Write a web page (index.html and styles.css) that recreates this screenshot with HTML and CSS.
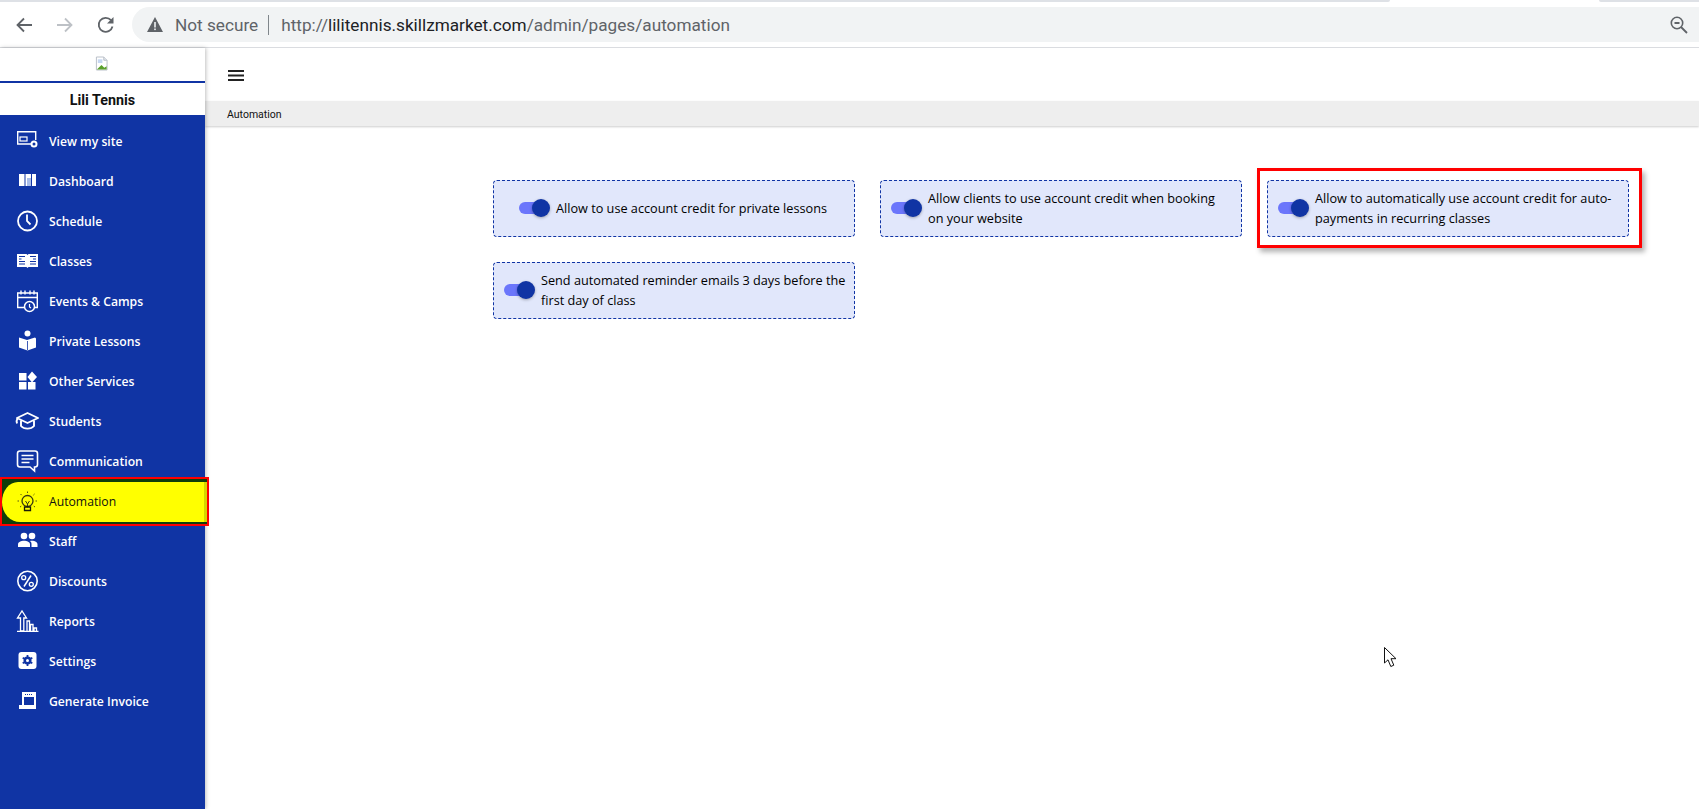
FILE: index.html
```html
<!DOCTYPE html>
<html lang="en">
<head>
<meta charset="utf-8">
<title>Automation</title>
<link rel="stylesheet" href="styles.css">
</head>
<body>
<header class="chrome">
  <div class="tabstrip"><span class="tab-left"></span><span class="tab-right"></span></div>
  <div class="toolbar">
    <svg class="nav" width="18" height="18" viewBox="0 0 18 18"><path d="M17 9H3M9 2.500L2.500 9 9 15.500" fill="none" stroke="#5f6368" stroke-width="1.800"/></svg>
    <svg class="nav" width="18" height="18" viewBox="0 0 18 18"><path d="M1 9h14M9 2.500L15.500 9 9 15.500" fill="none" stroke="#bdc1c6" stroke-width="1.800"/></svg>
    <svg class="nav" width="18" height="18" viewBox="0 0 18 18"><path d="M15.500 10.500A7 7 0 1 1 14 4.200" fill="none" stroke="#5f6368" stroke-width="1.800"/><path d="M16.500 1v6.500H10z" fill="#5f6368"/></svg>
    <div class="omnibox">
      <svg width="16" height="15" viewBox="0 0 16 15"><path d="M8 0l8 15H0z" fill="#5f6368"/><rect x="7.200" y="5" width="1.600" height="5.500" fill="#f1f3f4"/><rect x="7.200" y="11.500" width="1.600" height="1.600" fill="#f1f3f4"/></svg>
      <span class="not-secure">Not secure</span>
      <span class="divider"></span>
      <span class="url">http://<b>lilitennis.skillzmarket.com</b>/admin/pages/automation</span>
      <svg class="zoom-icon" width="18" height="18" viewBox="0 0 18 18"><circle cx="7" cy="7" r="5.700" fill="none" stroke="#5f6368" stroke-width="1.600"/><path d="M4.500 7h5M11 11l6 6" stroke="#5f6368" stroke-width="1.800"/></svg>
    </div>
  </div>
</header>

<div class="app">
  <aside class="sidebar">
    <div class="logo">
      <svg width="13" height="15" viewBox="0 0 14 15"><path d="M1.500.5h8l3.500 3.500v10.500H1.500z" fill="#fff" stroke="#b5bcc6"/><path d="M9.500.5V4H13" fill="#e4e8ee" stroke="#b5bcc6"/><path d="M2 14l5-5 3 3 2.500-1.500V14z" fill="#5aa02c"/><path d="M3 3h5v4H3z" fill="#c6d7f2"/></svg>
    </div>
    <div class="brand">Lili Tennis</div>
    <nav class="menu">
      <a class="item"><svg viewBox="0 0 24 24"><path d="M17 15H2.700V2.700h18V11" fill="none" stroke="#fff" stroke-width="1.400"/><rect x="5" y="8" width="7" height="4" fill="none" stroke="#fff" stroke-width="1.200"/><circle cx="19" cy="15" r="2.500" fill="none" stroke="#fff" stroke-width="2"/></svg>View my site</a>
      <a class="item"><svg viewBox="0 0 24 24"><path d="M4 5h5.500v12H4zM10.500 5H16v12h-5.500zM17 5h4v12h-4z" fill="#fff"/><rect x="12" y="9" width="4" height="8" fill="#a9bde9"/></svg>Dashboard</a>
      <a class="item"><svg viewBox="0 0 24 24"><circle cx="12.500" cy="12" r="9.500" fill="none" stroke="#fff" stroke-width="1.800"/><path d="M12 5.500V12l3.500 3.500" fill="none" stroke="#fff" stroke-width="1.800"/></svg>Schedule</a>
      <a class="item"><svg viewBox="0 0 24 24"><path d="M2 5h9.500l1 1 1-1H23v13H13.500l-1 1-1-1H2z" fill="#fff"/><path d="M4 7.500h6M4 10h2.500M4 12.500h6M4 15h6M15 7.500h6M18 10h3M15 12.500h6M15 15h6" stroke="#1034a4" stroke-width="1.100"/></svg>Classes</a>
      <a class="item"><svg viewBox="0 0 24 24"><path d="M9 18.500H2.700V4h19.600v14.500H20M2.700 8.500h19.600M6 1.500v4M10 1.500v4M15 1.500v4M19 1.500v4" fill="none" stroke="#fff" stroke-width="1.400"/><circle cx="14.500" cy="17.500" r="5" fill="#1034a4" stroke="#fff" stroke-width="1.500"/><path d="M14.500 15v3l1.500 1" fill="none" stroke="#fff" stroke-width="1.200"/></svg>Events &amp; Camps</a>
      <a class="item"><svg viewBox="0 0 24 24"><circle cx="12.500" cy="4.500" r="3" fill="#fff"/><path d="M4 8.500l8 2.500 8-2.500 1 1v9l-8.500 3-8.500-3v-9z" fill="#fff"/><path d="M12.500 12v9" stroke="#1034a4" stroke-width=".8"/></svg>Private Lessons</a>
      <a class="item"><svg viewBox="0 0 24 24"><path d="M4 4h7.500v7.500H4zM4 13h7.500v7.500H4zM13 13h7.500v7.500H13zM17 2.500l5 5.500-5 5.500-4.500-5.500z" fill="#fff"/></svg>Other Services</a>
      <a class="item"><svg viewBox="0 0 24 24"><path d="M12.500 4L23 9l-10.500 5L2 9z" fill="none" stroke="#fff" stroke-width="1.900" stroke-linejoin="round"/><path d="M6 11.500v5.500c3 3.500 10 3.500 13 0v-5.500M2.500 9.500C1.500 11 1.500 13 2 14.500" fill="none" stroke="#fff" stroke-width="1.900"/></svg>Students</a>
      <a class="item"><svg viewBox="0 0 24 24"><path d="M5 2h15a2.500 2.500 0 0 1 2.500 2.500v11a2.500 2.500 0 0 1-2.500 2.500h-.5v4l-4.500-4H5a2.500 2.500 0 0 1-2.500-2.500v-11A2.500 2.500 0 0 1 5 2z" fill="none" stroke="#fff" stroke-width="1.600"/><path d="M6.500 6.500h12M6.500 10h12M6.500 13.500h8" stroke="#fff" stroke-width="1.500"/></svg>Communication</a>
      <a class="item item-active"><svg viewBox="0 0 24 24"><circle cx="12.500" cy="11" r="5.500" fill="none" stroke="#3a3a10" stroke-width="1.300"/><path d="M10.500 11l2 3 2-3M12.500 14v3" fill="none" stroke="#3a3a10"/><path d="M9.500 17h6v3.500h-6z" fill="none" stroke="#1b1b08" stroke-width="1.300"/><path d="M12.500 1.500v2M5.500 4l1.500 1.500M19.500 4L18 5.500M2.500 11h2M20.500 11h2M5 17l1.500-1M20 17l-1.500-1" stroke="#55550f" stroke-width="1" stroke-dasharray="1.500 .5"/></svg>Automation</a>
      <a class="item"><svg viewBox="0 0 24 24"><circle cx="9" cy="7" r="3.300" fill="#fff"/><circle cx="17" cy="7" r="3.300" fill="#fff"/><path d="M3 18v-2.500c0-2.500 3-3.700 6-3.700s6 1.200 6 3.700V18z" fill="#fff"/><path d="M16.500 18v-3c0-1.200-.5-2.200-1.500-3 .7-.2 1.300-.2 2-.2 2.800 0 5.500 1.200 5.500 3.700V18z" fill="#fff"/></svg>Staff</a>
      <a class="item"><svg viewBox="0 0 24 24"><circle cx="12.500" cy="12" r="9.700" fill="none" stroke="#fff" stroke-width="1.600"/><path d="M16 6.500L9 17.500" stroke="#fff" stroke-width="1.500"/><circle cx="8.700" cy="8.700" r="2" fill="none" stroke="#fff" stroke-width="1.300"/><circle cx="16.300" cy="15.300" r="2" fill="none" stroke="#fff" stroke-width="1.300"/></svg>Discounts</a>
      <a class="item"><svg viewBox="0 0 24 24"><path d="M5.500 22V9H2.500l4.500-7 4.500 7H8.800v13z" fill="none" stroke="#fff" stroke-width="1.300"/><path d="M12 22V12h2.500v10M15.500 22v-6.500H18V22M19 22v-3h2.500v3M2 22.300h21.500" fill="none" stroke="#fff" stroke-width="1.300"/></svg>Reports</a>
      <a class="item"><svg viewBox="0 0 24 24"><rect x="3.500" y="3" width="18" height="17" rx="3" fill="#fff"/><circle cx="12.500" cy="11.500" r="4" fill="#1034a4"/><path d="M12.500 6v11M7.700 8.700l9.600 5.600M7.700 14.300l9.600-5.600" stroke="#1034a4" stroke-width="1.800"/><circle cx="12.500" cy="11.500" r="1.500" fill="#fff"/></svg>Settings</a>
      <a class="item"><svg viewBox="0 0 24 24"><path d="M7 3h14v17H4v-4h3z" fill="#fff"/><path d="M9 8h10v8H9z" fill="#1034a4"/><path d="M10 5.500h8" stroke="#1034a4" stroke-width="1" stroke-dasharray="1 1"/></svg>Generate Invoice</a>
    </nav>
  </aside>

  <main class="content">
    <div class="topbar">
      <svg width="16" height="11" viewBox="0 0 16 11"><path d="M0 1h16M0 5.500h16M0 10h16" stroke="#222" stroke-width="2"/></svg>
    </div>
    <div class="crumb">Automation</div>
    <section class="cards">
      <div class="card card-center"><span class="toggle"></span><span class="label">Allow to use account credit for private lessons</span></div>
      <div class="card"><span class="toggle"></span><span class="label">Allow clients to use account credit when booking<br>on your website</span></div>
      <div class="card card-marked"><span class="toggle"></span><span class="label">Allow to automatically use account credit for auto-payments in recurring classes</span></div>
      <div class="card"><span class="toggle"></span><span class="label">Send automated reminder emails 3 days before the first day of class</span></div>
    </section>
  </main>
</div>

<svg class="cursor" width="13" height="21" viewBox="0 0 13 21"><path d="M.5.500v15.500l3.500-3.200 2.800 6.700 3-1.300-2.800-6.500h5z" fill="#fff" stroke="#111"/></svg>
</body>
</html>
```

FILE: styles.css
```css
* { box-sizing: border-box; }
html, body { margin: 0; height: 100%; }
body {
  background: #fff;
  font-family: "Open Sans", "Noto Sans", sans-serif;
  overflow: hidden;
  display: flex;
  flex-direction: column;
}

/* browser chrome */
.chrome { height: 48px; flex: none; border-bottom: 1px solid #dadce0; background: #fff; }
.tabstrip { height: 2px; display: flex; justify-content: space-between; }
.tab-left { width: 1390px; background: #dee1e6; border-bottom-right-radius: 3px; }
.tab-right { width: 100px; background: #dee1e6; border-bottom-left-radius: 3px; }
.toolbar { display: flex; align-items: center; padding: 5px 11px 0 15px; height: 40px; }
.nav { flex: none; margin-right: 23px; }
.nav:nth-child(3) { margin-right: 17px; }
.omnibox {
  flex: 1; height: 35px; background: #f1f3f4; border-radius: 18px 0 0 18px;
  margin-right: -11px; padding: 0 11px 0 15px;
  display: flex; align-items: center;
  font-family: Roboto, "Liberation Sans", sans-serif; font-size: 17.200px; color: #5f6368;
}
.not-secure { margin-left: 12px; }
.divider { width: 1px; height: 20px; background: #80868b; margin: 0 12px 0 10px; }
.url b { font-weight: 400; color: #202124; }
.zoom-icon { margin-left: auto; }

/* layout */
.app { flex: 1; display: flex; min-height: 0; }
.sidebar {
  width: 205px; flex: none; background: #1034a4;
  box-shadow: 1px 0 4px rgba(0, 0, 0, .25);
  position: relative; z-index: 1;
}
.logo { height: 35px; background: #fff; border-bottom: 2px solid #1034a4; padding: 8px 0 0 95px; line-height: 0; }
.brand {
  height: 32px; background: #fff; text-align: center;
  font: 700 14.300px/34px Roboto, "Liberation Sans", sans-serif; color: #111;
}
.menu { display: flex; flex-direction: column; padding-top: 6px; }
.item {
  height: 40px; display: flex; align-items: center; gap: 10px; padding-left: 15px;
  color: #fff; font-size: 12.200px; font-weight: 600;
}
.item svg { width: 24px; height: 24px; flex: none; }
.item-active {
  height: 49px; margin: -4px -4px -5px 0; padding-left: 13px;
  color: #111; font-weight: 500;
  background: #0f3d0a;
  border: 2px solid #f00;
  position: relative; z-index: 2;
}
.item-active::before {
  content: ""; position: absolute; inset: 3px 0 2px 0; z-index: -1;
  background: #ffff00; border-radius: 16px 0 0 18px / 20px 0 0 20px;
}
.item-active::after {
  content: ""; position: absolute; top: 3px; bottom: 2px; right: 0; width: 3px; z-index: -1;
  background: #d6d600;
}

/* main */
.content { flex: 1; min-width: 0; display: flex; flex-direction: column; }
.topbar { height: 53px; padding: 22px 0 0 23px; line-height: 0; flex: none; }
.crumb {
  height: 25px; flex: none; padding-left: 22px; background: #eeeeee;
  font: 400 10.500px/27px Roboto, "Liberation Sans", sans-serif; color: #111;
  box-shadow: 0 1px 2px rgba(0, 0, 0, .2);
}
.cards {
  display: grid; grid-template-columns: repeat(3, 362px); grid-auto-rows: 57px;
  column-gap: 25px; row-gap: 25px; padding: 54px 0 0 288px;
}
.card {
  display: flex; align-items: center; gap: 6px; padding: 0 6px 2px 10px;
  background: #e1e7fb; border: 1px dashed #1034a4; border-radius: 4px;
  font-size: 12.700px; line-height: 20px; color: #000;
}
.card-center { justify-content: center; padding: 0 10px 2px 8px; }
.card-marked { position: relative; }
.card-marked::after {
  content: ""; position: absolute; inset: -13px -14px -12px -11px;
  border: 3px solid #f00;
  box-shadow: 3px 4px 5px rgba(0, 0, 0, .3);
  pointer-events: none;
}
.toggle { flex: none; width: 31px; height: 18px; position: relative; }
.toggle::before {
  content: ""; position: absolute; left: 0; top: 3px; width: 26px; height: 12px;
  background: #6b76fb; border-radius: 6px;
}
.toggle::after {
  content: ""; position: absolute; right: 0; top: 0; width: 18px; height: 18px;
  background: #1034a4; border-radius: 50%;
  box-shadow: 0 1px 3px rgba(0, 0, 0, .3);
}

.cursor { position: absolute; left: 1384px; top: 647px; }
```
